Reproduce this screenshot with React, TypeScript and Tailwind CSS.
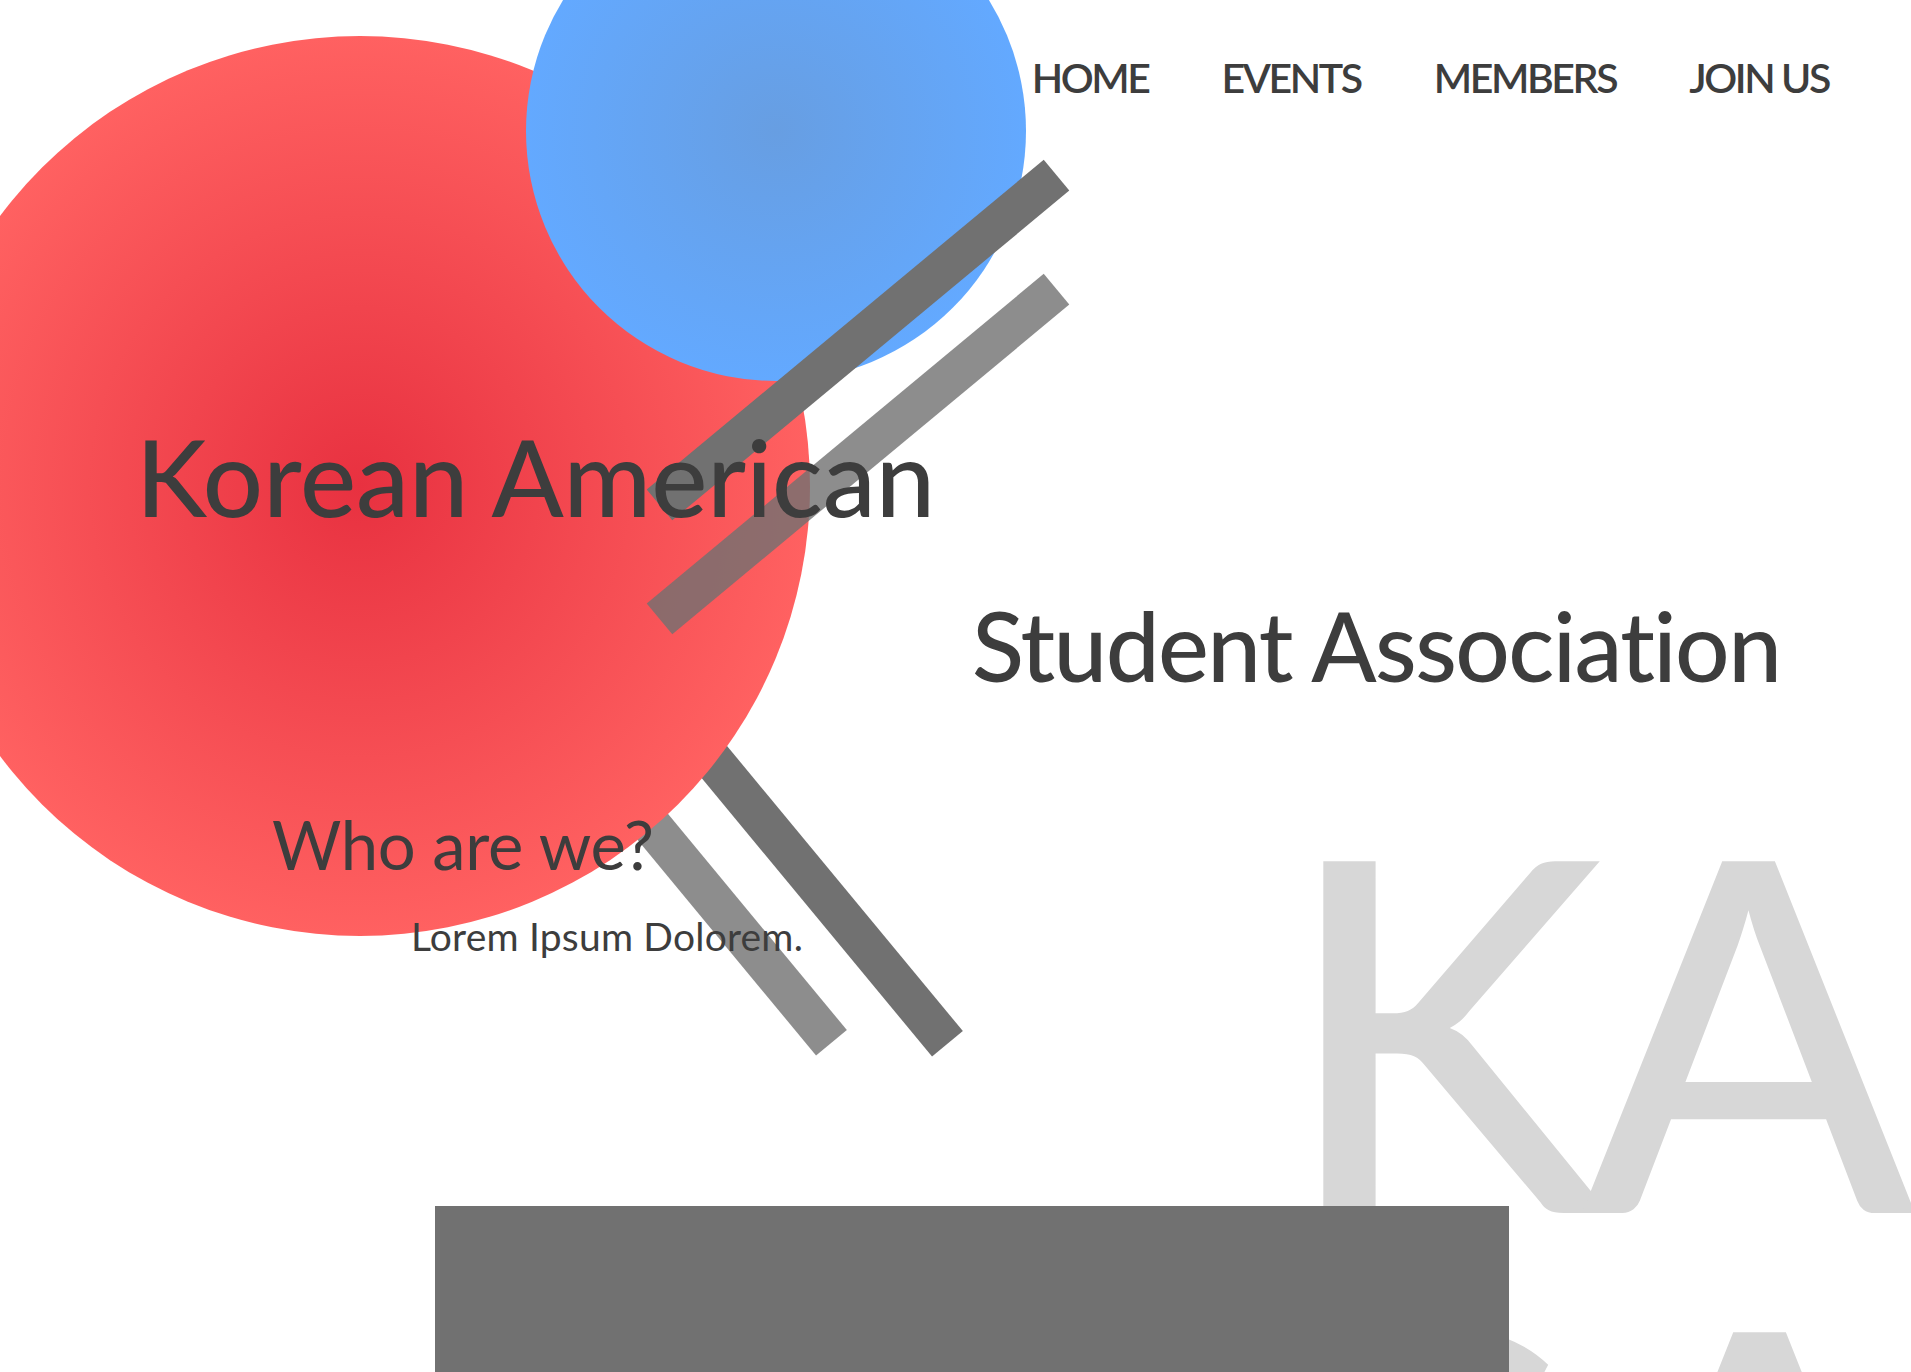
const textFont = "font-['Lato','Open_Sans',sans-serif]";

const navItems = ["HOME", "EVENTS", "MEMBERS", "JOIN US"];

function Backdrop() {
  // taegukgi-ish shapes: circles + trigram bars
  return (
    <svg
      className="absolute left-0 top-0 w-[1911px] h-[1200px] pointer-events-none"
      viewBox="0 0 1911 1200"
    >
      <defs>
        <radialGradient id="redGrad" cx="50%" cy="50%" r="50%">
          <stop offset="0%" stopColor="#e83140" />
          <stop offset="100%" stopColor="#ff6161" />
        </radialGradient>
        <radialGradient id="blueGrad" cx="50%" cy="50%" r="50%">
          <stop offset="0%" stopColor="#679ee2" />
          <stop offset="100%" stopColor="#63a9ff" />
        </radialGradient>
      </defs>

      {/* lower bars sit under the red circle */}
      <rect x={525} y={825} width={516} height={40} fill="#717171" transform="rotate(50.4 783 845)" />
      <rect x={409} y={824} width={516} height={40} fill="#717171" opacity={0.8} transform="rotate(50.4 667 844)" />

      <circle cx={360} cy={486} r={450} fill="url(#redGrad)" />
      <circle cx={776} cy={131} r={250} fill="url(#blueGrad)" />

      {/* upper bars over the circles */}
      <rect x={600} y={320} width={516} height={40} fill="#717171" transform="rotate(-39.7 858 340)" />
      <rect x={600} y={434} width={516} height={40} fill="#717171" opacity={0.8} transform="rotate(-39.7 858 454)" />
    </svg>
  );
}

export default function App() {
  return (
    <div className={`relative w-full min-h-[1372px] overflow-hidden bg-white text-[#3d3d3d] ${textFont} [font-variant-ligatures:none]`}>
      <Backdrop />

      {/* big watermark letters */}
      <div className="absolute left-[1280px] top-[788px] text-[490px] leading-[471px] font-medium text-[#d7d7d7] tracking-[-26px] select-none">
        <div>KA</div>
        <div>
          <span className="ml-[30px] tracking-[16px]">S</span>A
        </div>
      </div>

      <div className="relative">
        {/* NAV */}
        <nav className="flex justify-end gap-[73px] pt-[57px] pr-[82px] text-[41px] leading-none font-semibold tracking-[-2.4px]">
          {navItems.map((item) => (
            <a key={item} href="#" className="whitespace-nowrap">
              {item}
            </a>
          ))}
        </nav>

        {/* HERO */}
        <h1 className="mt-[325px] ml-[136px] text-[106px] leading-none font-medium whitespace-nowrap">
          Korean American
        </h1>
        <h2 className="mt-[68px] ml-[972px] text-[96px] leading-none font-medium tracking-[-1.6px] whitespace-nowrap">
          Student Association
        </h2>

        <h3 className="mt-[118px] ml-[272px] text-[67px] leading-none font-normal tracking-[-0.3px] whitespace-nowrap">
          Who are we?
        </h3>
        <p className="mt-[39px] ml-[411px] text-[39px] leading-none font-normal tracking-[0.2px] whitespace-nowrap">
          Lorem Ipsum Dolorem.
        </p>

        {/* ABOUT PANEL */}
        <div className="relative mt-[250px] ml-[435px] w-[1074px] h-[300px] bg-[#717171]" />
      </div>
    </div>
  );
}
